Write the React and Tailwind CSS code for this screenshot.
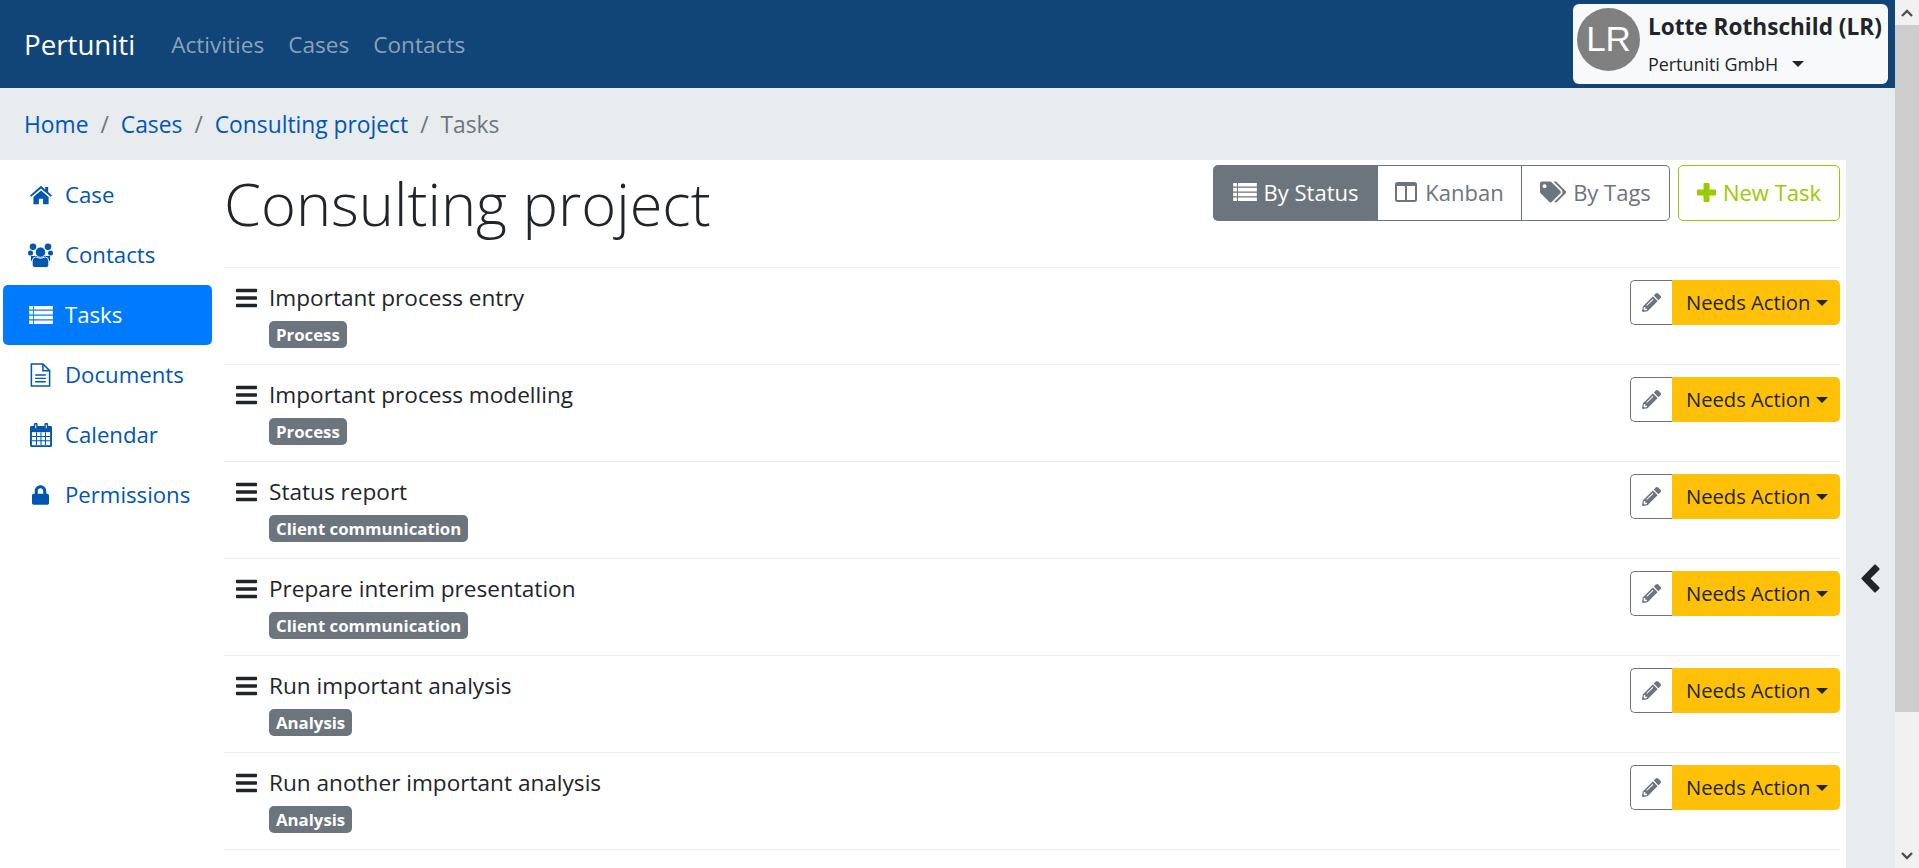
import { FaBars, FaTags, FaPencilAlt, FaLock } from 'react-icons/fa';

const tasks = [
  { title: 'Important process entry', tag: 'Process' },
  { title: 'Important process modelling', tag: 'Process' },
  { title: 'Status report', tag: 'Client communication' },
  { title: 'Prepare interim presentation', tag: 'Client communication' },
  { title: 'Run important analysis', tag: 'Analysis' },
  { title: 'Run another important analysis', tag: 'Analysis' },
];

function HomeIcon({ className }) {
  return (
    <svg viewBox="0 0 26 22" className={className} fill="currentColor">
      <path d="M13 0 L18 4.4 V1.5 H21.5 V7.5 L26 11.5 L24.6 13 L13 3.2 L1.4 13 L0 11.5 Z" />
      <path d="M4 13.4 L13 5.6 L22 13.4 V22 H15.5 V15.5 H10.5 V22 H4 Z" />
    </svg>
  );
}

function UsersIcon({ className }) {
  return (
    <svg viewBox="0 0 26 25" className={className} fill="currentColor">
      <circle cx="5.2" cy="3.4" r="3.4" />
      <circle cx="20.8" cy="3.4" r="3.4" />
      <circle cx="2.6" cy="10" r="2.6" />
      <circle cx="23.4" cy="10" r="2.6" />
      <path d="M3 13 H23 V18 H3 Z" />
      <path stroke="#fff" strokeWidth="0.9" d="M7 25 Q4.4 25 4.4 22.5 V18.5 Q4.4 14.4 8 14 Q13 17 18 14 Q21.6 14.4 21.6 18.5 V22.5 Q21.6 25 19 25 Z" />
      <circle cx="13" cy="9" r="5.4" stroke="#fff" strokeWidth="0.9" />
    </svg>
  );
}

function ListIcon({ className }) {
  return (
    <svg viewBox="0 0 25 19" className={className} fill="currentColor">
      <path d="M0 0h4v3.7H0z M5 0h20v3.7H5z M0 5h4v3.9H0z M5 5h20v3.9H5z M0 10.2h4v3.9H0z M5 10.2h20v3.9H5z M0 15.3h4V19H0z M5 15.3h20V19H5z" />
    </svg>
  );
}

function FileIcon({ className }) {
  return (
    <svg viewBox="0 0 21 25" className={className} fill="none" stroke="currentColor" strokeWidth="1.6">
      <path d="M1 1 H13 L20 8 V24 H1 Z" />
      <path d="M13 1 V8 H20" />
      <path d="M5 12.5 H16 M5 16 H16 M5 19.5 H16" strokeWidth="1.5" />
    </svg>
  );
}

function CalendarIcon({ className }) {
  return (
    <svg viewBox="0 0 23 25" className={className}>
      <path fill="currentColor" d="M1.5 3 H4 V1.6 A1.6 1.6 0 0 1 8 1.6 V3 H15 V1.6 A1.6 1.6 0 0 1 19 1.6 V3 H21.5 A1.5 1.5 0 0 1 23 4.5 V23.5 A1.5 1.5 0 0 1 21.5 25 H1.5 A1.5 1.5 0 0 1 0 23.5 V4.5 A1.5 1.5 0 0 1 1.5 3 Z" />
      <path fill="#fff" d="M2 9.5 H21 V23.2 H2 Z" />
      <path fill="none" stroke="currentColor" strokeWidth="1.1" d="M2 14 H21 M2 18.6 H21 M6.8 9.5 V23 M11.5 9.5 V23 M16.2 9.5 V23" />
      <path fill="none" stroke="#fff" strokeWidth="1" d="M6 1.6 V5.5 M17 1.6 V5.5" />
    </svg>
  );
}

function KanbanIcon({ className }) {
  return (
    <svg viewBox="0 0 22 20" className={className} fill="none" stroke="currentColor" strokeWidth="2">
      <rect x="1" y="1" width="20" height="18" rx="1.5" />
      <path d="M1 3 H21" />
      <path d="M11 1 V19" />
    </svg>
  );
}

function PlusIcon({ className }) {
  return (
    <svg viewBox="0 0 19 19" className={className} fill="currentColor">
      <path d="M6.5 1 Q6.5 0 7.5 0 H11.5 Q12.5 0 12.5 1 V6.5 H18 Q19 6.5 19 7.5 V11.5 Q19 12.5 18 12.5 H12.5 V18 Q12.5 19 11.5 19 H7.5 Q6.5 19 6.5 18 V12.5 H1 Q0 12.5 0 11.5 V7.5 Q0 6.5 1 6.5 H6.5 Z" />
    </svg>
  );
}

function ChevronIcon({ className }) {
  return (
    <svg viewBox="0 0 19 29" className={className} fill="currentColor">
      <path d="M0.7 13.8 L13.3 0.7 Q14 0 14.7 0.7 L18.3 4.3 Q19 5 18.3 5.7 L9.5 14.5 L18.3 23.3 Q19 24 18.3 24.7 L14.7 28.3 Q14 29 13.3 28.3 L0.7 15.2 Q0 14.5 0.7 13.8 Z" />
    </svg>
  );
}

function Caret() {
  return <span className="inline-block w-0 h-0 border-t-[6px] border-x-[6px] border-x-transparent border-t-current" />;
}

function SideLink({ icon, label, active }) {
  return (
    <a
      href="#"
      className={`flex items-center h-[60px] w-[209px] rounded-[5px] pl-[25px] text-[22.2px] ${active ? 'bg-[#007bff] text-white' : 'text-[#0056b3]'}`}
    >
      <span className="w-[25px] flex justify-center mr-[12px]">{icon}</span>
      {label}
    </a>
  );
}

function TaskRow({ task }) {
  return (
    <div className="flex justify-between h-[97px] border-t border-[#e9ecef] pt-[12px]">
      <div className="flex">
        <FaBars className="w-[21px] h-[24px] ml-[12px] mt-[6px] mr-[12px] text-[#212529]" />
        <div>
          <div className="leading-[36px] text-[#212529]">{task.title}</div>
          <span className="inline-flex items-center h-[27px] mt-[5px] pt-[1px] px-[7px] rounded-[5px] bg-[#6c757d] text-white text-[16.8px] font-bold">
            {task.tag}
          </span>
        </div>
      </div>
      <div className="flex h-[45px]">
        <button className="w-[42px] flex items-center justify-center bg-white border border-r-0 border-[#6c757d] rounded-l-[5px] text-[#6c757d]">
          <FaPencilAlt className="w-[19px] h-[19px]" />
        </button>
        <button className="w-[168px] flex items-center pl-[14px] gap-[6px] bg-[#ffc107] rounded-r-[5px] text-[#212529] text-[20.2px]">
          Needs Action
          <Caret />
        </button>
      </div>
    </div>
  );
}

export default function App() {
  return (
    <div className="flex h-[868px] overflow-hidden bg-white font-['Open_Sans',sans-serif] text-[22.6px]">
      <div className="flex-1 min-w-0 flex flex-col">
        {/* Navbar */}
        <header className="h-[88px] shrink-0 flex items-center bg-[#114477] pl-[24px] pr-[7px]">
          <a href="#" className="text-white text-[27.7px] mr-[36px] mt-[1px]">Pertuniti</a>
          <nav className="flex gap-[24px] text-[#8aa2bb] mt-[2px]">
            <a href="#">Activities</a>
            <a href="#">Cases</a>
            <a href="#">Contacts</a>
          </nav>
          <div className="ml-auto w-[315px] h-[80px] flex bg-[#f8f9fa] rounded-[6px] pl-[4px] pt-[4px]">
            <div className="w-[63px] h-[63px] shrink-0 rounded-full bg-[#808080] text-white text-[35px] font-['Liberation_Sans',sans-serif] flex items-center justify-center">
              LR
            </div>
            <div className="ml-[8px] text-[#212529]">
              <div className="font-bold leading-[26px] mt-[6px] whitespace-nowrap">Lotte Rothschild (LR)</div>
              <div className="flex items-center gap-[14px] text-[17.9px] mt-[12px] leading-[24px]">
                Pertuniti GmbH
                <Caret />
              </div>
            </div>
          </div>
        </header>

        {/* Breadcrumb */}
        <div className="h-[72px] shrink-0 flex items-center bg-[#e9ecef] pl-[24px] pt-[3px] text-[#0056b3] text-[22.8px]">
          <a href="#">Home</a>
          <span className="px-[12px] text-[#6c757d]">/</span>
          <a href="#">Cases</a>
          <span className="px-[12px] text-[#6c757d]">/</span>
          <a href="#">Consulting project</a>
          <span className="px-[12px] text-[#6c757d]">/</span>
          <span className="text-[#6c757d]">Tasks</span>
        </div>

        <div className="flex-1 flex min-h-0">
          {/* Sidebar */}
          <aside className="w-[224px] shrink-0 pl-[3px] pt-[5px]">
            <SideLink icon={<HomeIcon className="w-[22px] h-[20px]" />} label="Case" />
            <SideLink icon={<UsersIcon className="w-[26px] h-[25px]" />} label="Contacts" />
            <SideLink icon={<ListIcon className="w-[24px] h-[18px]" />} label="Tasks" active />
            <SideLink icon={<FileIcon className="w-[21px] h-[24px]" />} label="Documents" />
            <SideLink icon={<CalendarIcon className="w-[22px] h-[24px]" />} label="Calendar" />
            <SideLink icon={<FaLock className="w-[17px] h-[20px]" />} label="Permissions" />
          </aside>

          {/* Content */}
          <main className="flex-1 min-w-0 pr-[6px]">
            <div className="flex justify-between h-[107px] pt-[5px]">
              <h1 className="text-[59.6px] leading-[76px] font-[350] text-[#212529]">Consulting project</h1>
              <div className="flex gap-[8px] h-[56px] text-[22px]">
                <div className="flex">
                  <button className="w-[165px] flex items-center justify-center gap-[7px] pb-[2px] bg-[#6c757d] text-white rounded-l-[5px]">
                    <ListIcon className="w-[24px] h-[18px]" />
                    By Status
                  </button>
                  <button className="w-[144px] flex items-center justify-center gap-[8px] pb-[2px] border-y border-r border-[#6c757d] text-[#6c757d]">
                    <KanbanIcon className="w-[22px] h-[20px]" />
                    Kanban
                  </button>
                  <button className="w-[148px] flex items-center justify-center gap-[7px] pb-[2px] border-y border-r border-[#6c757d] text-[#6c757d] rounded-r-[5px]">
                    <FaTags className="w-[26px] h-[22px]" />
                    By Tags
                  </button>
                </div>
                <button className="w-[162px] flex items-center justify-center gap-[7px] pb-[2px] border border-[#9c0] text-[#9c0] rounded-[5px]">
                  <PlusIcon className="w-[19px] h-[19px]" />
                  New Task
                </button>
              </div>
            </div>
            {tasks.map((task) => (
              <TaskRow key={task.title} task={task} />
            ))}
            <div className="border-t border-[#e9ecef]" />
          </main>

          {/* Collapsed right panel */}
          <div className="w-[49px] shrink-0 bg-[#e9ecef] flex items-center justify-center pt-[128px]">
            <ChevronIcon className="w-[19px] h-[29px] text-[#212529]" />
          </div>
        </div>
      </div>

      {/* Browser scrollbar */}
      <div className="w-[24px] shrink-0 flex flex-col bg-[#f1f1f1] text-[#505050]">
        <div className="h-[25px] flex items-center justify-center">
          <svg viewBox="0 0 12 8" className="w-[12px] h-[8px]" fill="none" stroke="currentColor" strokeWidth="2.4"><path d="M1 7 L6 2 L11 7" /></svg>
        </div>
        <div className="h-[687px] bg-[#cdcdcd]" />
        <div className="mt-auto h-[25px] flex items-center justify-center">
          <svg viewBox="0 0 12 8" className="w-[12px] h-[8px]" fill="none" stroke="currentColor" strokeWidth="2.4"><path d="M1 1 L6 6 L11 1" /></svg>
        </div>
      </div>
    </div>
  );
}
